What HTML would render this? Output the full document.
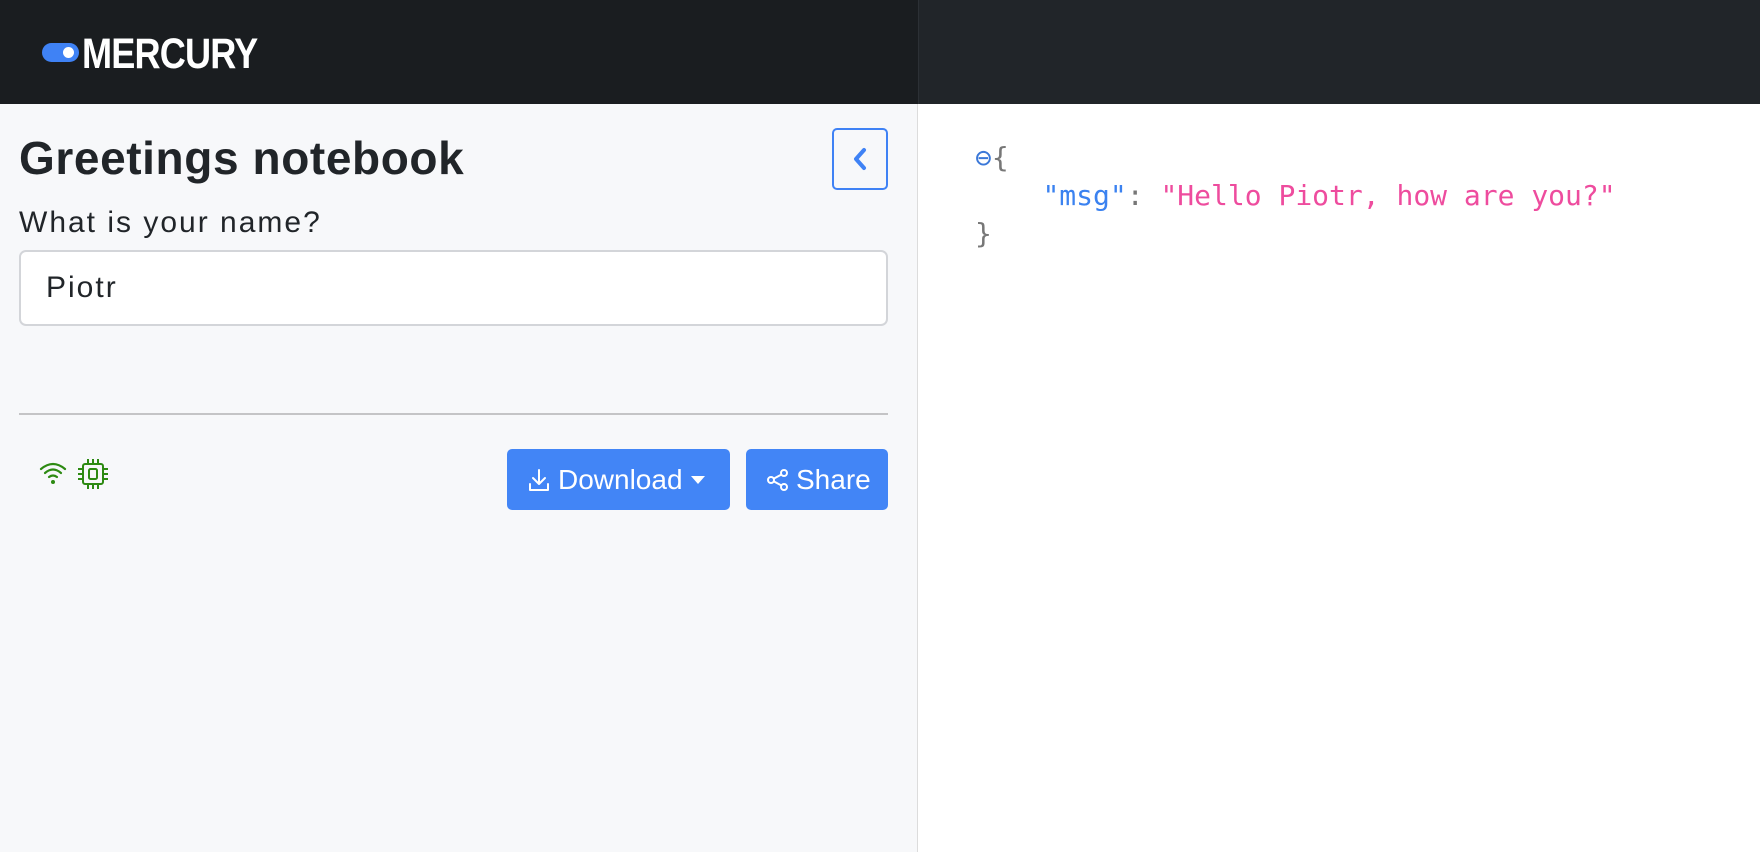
<!DOCTYPE html>
<html><head><meta charset="utf-8"><style>
*{box-sizing:border-box;margin:0;padding:0}
body{width:1760px;height:852px;overflow:hidden;font-family:"Liberation Sans",sans-serif;background:#fff;position:relative}
.hl{position:absolute;left:0;top:0;width:918px;height:104px;background:#1a1d20}
.hr{position:absolute;left:918px;top:0;width:842px;height:104px;background:#212529;border-left:1px solid #2c3035}
.tog{position:absolute;left:42px;top:43px;width:37px;height:19px;border-radius:10px;background:#3f82f5}
.tog:after{content:"";position:absolute;right:5px;top:4px;width:11px;height:11px;border-radius:50%;background:#fff}
.logo{position:absolute;left:82px;top:30px;font-family:"Liberation Sans Narrow","Liberation Sans",sans-serif;font-weight:bold;font-size:43px;color:#fff;letter-spacing:-1px;transform:scaleX(.84);transform-origin:left}
.side{position:absolute;left:0;top:104px;width:918px;height:748px;background:#f7f8fa;border-right:1px solid #dcdcdc}
h1{position:absolute;left:19px;top:131px;font-size:46px;font-weight:bold;color:#212529;letter-spacing:.6px}
.cb{position:absolute;left:832px;top:128px;width:56px;height:62px;border:2px solid #3f82f5;border-radius:5px}
.lab{position:absolute;left:19px;top:206px;font-size:30px;color:#212529;letter-spacing:2px}
.inp{position:absolute;left:19px;top:250px;width:869px;height:76px;background:#fff;border:2px solid #d3d5d9;border-radius:7px;font-size:30px;color:#212529;padding:19px 0 0 25px;letter-spacing:2px}
.hr1{position:absolute;left:19px;top:413px;width:869px;height:2px;background:#c4c4c6}
.btn{position:absolute;top:449px;height:61px;background:#4285f6;border-radius:5px;color:#fff;font-size:28px;display:flex;align-items:center}
.json{position:absolute;left:975px;top:139px;font-family:"DejaVu Sans Mono",monospace;font-size:28px;line-height:38px;color:#777;white-space:pre}
.k{color:#3b82f0}.s{color:#ee4c9e}.m{color:#3b78d8}
</style></head><body>
<div class="hl"></div><div class="hr"></div>
<div class="tog"></div><div class="logo">MERCURY</div>
<div class="side"></div>
<h1>Greetings notebook</h1>
<div class="cb"><svg width="52" height="58" viewBox="0 0 52 58"><path d="M30 20 L22 29 L30 38" stroke="#3f82f5" stroke-width="4" fill="none" stroke-linecap="round" stroke-linejoin="round"/></svg></div>
<div class="lab">What is your name?</div>
<div class="inp">Piotr</div>
<div class="hr1"></div>
<svg style="position:absolute;left:38px;top:460px" width="30" height="26" viewBox="0 0 30 26"><g fill="none" stroke="#2d8a12" stroke-width="2.2" stroke-linecap="round"><path d="M3 9 Q15 -1 27 9"/><path d="M7 13 Q15 6 23 13"/><path d="M11 17 Q15 14 19 17"/></g><circle cx="15" cy="22" r="2" fill="#2d8a12"/></svg>
<svg style="position:absolute;left:76px;top:457px" width="34" height="34" viewBox="0 0 34 34"><g fill="none" stroke="#2d8a12" stroke-width="2"><rect x="7" y="7" width="20" height="20" rx="2"/><rect x="13" y="12" width="8" height="10" rx="1.5"/><path d="M12 2v5M17 2v5M22 2v5M12 27v5M17 27v5M22 27v5M2 12h5M2 17h5M2 22h5M27 12h5M27 17h5M27 22h5"/></g></svg>
<div class="btn" style="left:507px;width:223px"><svg style="margin-left:21px" width="22" height="24" viewBox="0 0 22 24"><g fill="none" stroke="#fff" stroke-width="2" stroke-linecap="round" stroke-linejoin="round"><path d="M11 2v14M5 10l6 6 6-6M2 16v6h18v-6"/></g></svg><span style="margin-left:8px">Download</span><svg style="margin-left:8px" width="14" height="10" viewBox="0 0 14 10"><path d="M0 1h14L7 9z" fill="#fff"/></svg></div>
<div class="btn" style="left:746px;width:142px"><svg style="margin-left:20px" width="24" height="24" viewBox="0 0 24 24"><g fill="none" stroke="#fff" stroke-width="2"><circle cx="18" cy="5" r="3"/><circle cx="5" cy="12" r="3"/><circle cx="18" cy="19" r="3"/><path d="M8 10.5l7.5-4M8 13.5l7.5 4"/></g></svg><span style="margin-left:6px">Share</span></div>
<div class="json"><span class="m">⊖</span>{
    <span class="k">"msg"</span>: <span class="s">"Hello Piotr, how are you?"</span>
}</div>
</body></html>
